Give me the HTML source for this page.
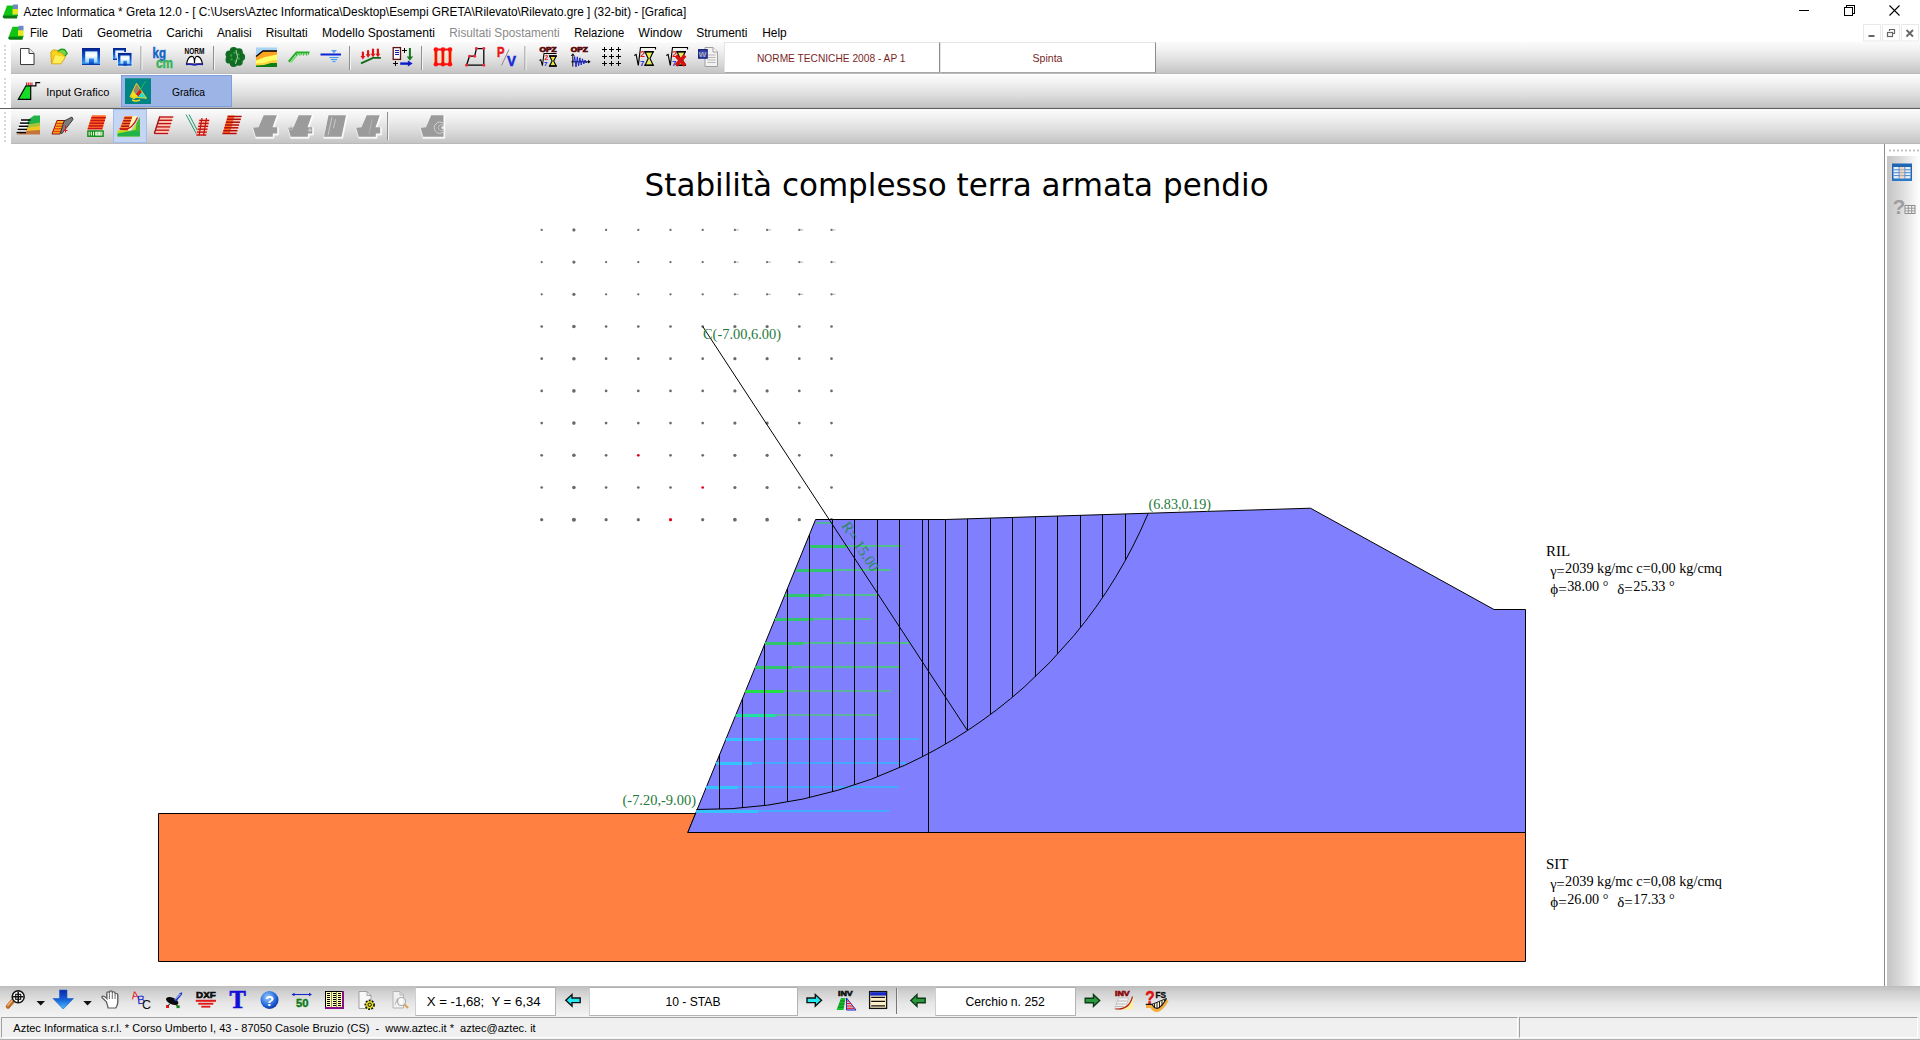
<!DOCTYPE html>
<html lang="it"><head><meta charset="utf-8"><title>Aztec Informatica * Greta 12.0</title>
<style>
html,body{margin:0;padding:0;background:#fff;overflow:hidden}
body{width:1920px;height:1040px;position:relative;font-family:"Liberation Sans","DejaVu Sans",sans-serif}
.abs{position:absolute}
#titlebar{left:0;top:0;width:1920px;height:22px;background:#fff}
#menubar{left:0;top:22px;width:1920px;height:20px;background:#fff}
.tb{left:11px;width:1909px;background:linear-gradient(#fbfbfb 0%,#f1f1f1 25%,#dadada 65%,#c5c5c5 96%,#b2b2b2 100%)}
#tb1{top:42px;height:32px}
#tb2{top:75px;height:32.5px}
#tb3{top:109px;height:35px}
#sepline{left:0;top:108px;width:1920px;height:1px;background:#5e5e5e}
#gripcol{left:0;top:42px;width:11px;height:102px;background:#fff}
.field{background:#fff;border:1px solid #cfcfcf;border-top-color:#b0b0b0;border-bottom-color:#b4b4b4;border-right-color:#b4b4b4;box-sizing:border-box}
.fieldt{border-top-color:#e4e4e4;border-left-color:#e4e4e4;border-right-color:#8c8c8c;border-bottom-color:#a8a8a8}
#tabsel{left:121px;top:75px;width:111px;height:31.5px;background:#9db5e6;border:1px solid #7e9fdf;box-sizing:border-box}
#icosel{left:113px;top:109px;width:34px;height:34px;background:#c5d6f5;border:1px solid #a3bde8;box-sizing:border-box}
#canvas{left:0;top:144px;width:1884px;height:842px;background:#fff}
#rpanel{left:1884px;top:144px;width:36px;height:842px;background:#fff}
#rline{left:1884px;top:144px;width:1px;height:842px;background:#8c8c8c}
#rgrad{left:1887px;top:156px;width:33px;height:830px;background:linear-gradient(90deg,#c4c4c4 0%,#d9d9d9 40%,#f6f6f6 85%,#ffffff 100%)}
#btb{left:0;top:986px;width:1920px;height:31px;background:linear-gradient(#bdbdbd 0%,#cfcfcf 18%,#e6e6e6 55%,#f4f4f4 100%)}
#status{left:0;top:1017px;width:1920px;height:23px;background:#f0f0f0}
.sp{top:1017px;height:21px;box-sizing:border-box;border:1px solid #a0a0a0;border-right-color:#fff;border-bottom-color:#fff;background:#f0f0f0}
svg{position:absolute;left:0;top:0}
</style></head><body>
<div id="titlebar" class="abs"></div>
<div id="menubar" class="abs"></div>
<div id="gripcol" class="abs"></div>
<div id="tb1" class="abs tb"></div>
<div id="tb2" class="abs tb"></div>
<div id="sepline" class="abs"></div>
<div id="tb3" class="abs tb"></div>
<div id="tabsel" class="abs"></div>
<div id="icosel" class="abs"></div>
<div class="abs field fieldt" style="left:724px;top:42px;width:216px;height:31px"></div>
<div class="abs field fieldt" style="left:940px;top:42px;width:216px;height:31px"></div>
<div id="canvas" class="abs"></div>
<div id="rpanel" class="abs"></div><div id="rline" class="abs"></div><div id="rgrad" class="abs"></div>
<div id="btb" class="abs"></div>
<div class="abs field" style="left:415px;top:987px;width:141px;height:29px"></div>
<div class="abs field" style="left:589px;top:987px;width:209px;height:29px"></div>
<div class="abs field" style="left:935px;top:987px;width:141px;height:29px"></div>
<div id="status" class="abs"></div>
<div class="abs sp" style="left:1px;width:1517px"></div>
<div class="abs sp" style="left:1519px;width:399px"></div>
<div class="abs" style="left:0;top:1039px;width:1920px;height:1px;background:#b0b0b0"></div>
<svg width="1920" height="1040" viewBox="0 0 1920 1040">
<text x="644.6" y="196.4" font-size="32" font-family='"DejaVu Sans", "Liberation Sans", sans-serif' textLength="624" lengthAdjust="spacingAndGlyphs" fill="#000">Stabilità complesso terra armata pendio</text>
<circle cx="541.7" cy="229.9" r="1.15" fill="#6a6a6a"/>
<circle cx="541.7" cy="262.1" r="1.15" fill="#6a6a6a"/>
<circle cx="541.7" cy="294.3" r="1.15" fill="#6a6a6a"/>
<circle cx="541.7" cy="326.5" r="1.35" fill="#6a6a6a"/>
<circle cx="541.7" cy="358.7" r="1.35" fill="#6a6a6a"/>
<circle cx="541.7" cy="390.9" r="1.35" fill="#6a6a6a"/>
<circle cx="541.7" cy="423.1" r="1.35" fill="#6a6a6a"/>
<circle cx="541.7" cy="455.3" r="1.35" fill="#6a6a6a"/>
<circle cx="541.7" cy="487.5" r="1.35" fill="#6a6a6a"/>
<circle cx="541.7" cy="519.7" r="1.6" fill="#6a6a6a"/>
<circle cx="573.9" cy="229.9" r="1.6" fill="#6a6a6a"/>
<circle cx="573.9" cy="262.1" r="1.6" fill="#6a6a6a"/>
<circle cx="573.9" cy="294.3" r="1.6" fill="#6a6a6a"/>
<circle cx="573.9" cy="326.5" r="1.8" fill="#6a6a6a"/>
<circle cx="573.9" cy="358.7" r="1.8" fill="#6a6a6a"/>
<circle cx="573.9" cy="390.9" r="1.8" fill="#6a6a6a"/>
<circle cx="573.9" cy="423.1" r="1.8" fill="#6a6a6a"/>
<circle cx="573.9" cy="455.3" r="1.8" fill="#6a6a6a"/>
<circle cx="573.9" cy="487.5" r="1.8" fill="#6a6a6a"/>
<circle cx="573.9" cy="519.7" r="2.05" fill="#6a6a6a"/>
<circle cx="606.1" cy="229.9" r="1.15" fill="#6a6a6a"/>
<circle cx="606.1" cy="262.1" r="1.15" fill="#6a6a6a"/>
<circle cx="606.1" cy="294.3" r="1.15" fill="#6a6a6a"/>
<circle cx="606.1" cy="326.5" r="1.35" fill="#6a6a6a"/>
<circle cx="606.1" cy="358.7" r="1.35" fill="#6a6a6a"/>
<circle cx="606.1" cy="390.9" r="1.35" fill="#6a6a6a"/>
<circle cx="606.1" cy="423.1" r="1.35" fill="#6a6a6a"/>
<circle cx="606.1" cy="455.3" r="1.35" fill="#6a6a6a"/>
<circle cx="606.1" cy="487.5" r="1.35" fill="#6a6a6a"/>
<circle cx="606.1" cy="519.7" r="1.6" fill="#6a6a6a"/>
<circle cx="638.3" cy="229.9" r="1.15" fill="#6a6a6a"/>
<circle cx="638.3" cy="262.1" r="1.15" fill="#6a6a6a"/>
<circle cx="638.3" cy="294.3" r="1.15" fill="#6a6a6a"/>
<circle cx="638.3" cy="326.5" r="1.35" fill="#6a6a6a"/>
<circle cx="638.3" cy="358.7" r="1.35" fill="#6a6a6a"/>
<circle cx="638.3" cy="390.9" r="1.35" fill="#6a6a6a"/>
<circle cx="638.3" cy="423.1" r="1.35" fill="#6a6a6a"/>
<circle cx="638.3" cy="455.3" r="1.35" fill="#e0001a"/>
<circle cx="638.3" cy="487.5" r="1.35" fill="#6a6a6a"/>
<circle cx="638.3" cy="519.7" r="1.6" fill="#6a6a6a"/>
<circle cx="670.5" cy="229.9" r="1.15" fill="#6a6a6a"/>
<circle cx="670.5" cy="262.1" r="1.15" fill="#6a6a6a"/>
<circle cx="670.5" cy="294.3" r="1.15" fill="#6a6a6a"/>
<circle cx="670.5" cy="326.5" r="1.35" fill="#6a6a6a"/>
<circle cx="670.5" cy="358.7" r="1.35" fill="#6a6a6a"/>
<circle cx="670.5" cy="390.9" r="1.35" fill="#6a6a6a"/>
<circle cx="670.5" cy="423.1" r="1.35" fill="#6a6a6a"/>
<circle cx="670.5" cy="455.3" r="1.35" fill="#6a6a6a"/>
<circle cx="670.5" cy="487.5" r="1.35" fill="#6a6a6a"/>
<circle cx="670.5" cy="519.7" r="1.6" fill="#e0001a"/>
<circle cx="702.7" cy="229.9" r="1.15" fill="#6a6a6a"/>
<circle cx="702.7" cy="262.1" r="1.15" fill="#6a6a6a"/>
<circle cx="702.7" cy="294.3" r="1.15" fill="#6a6a6a"/>
<circle cx="702.7" cy="326.5" r="1.35" fill="#6a6a6a"/>
<circle cx="702.7" cy="358.7" r="1.35" fill="#6a6a6a"/>
<circle cx="702.7" cy="390.9" r="1.35" fill="#6a6a6a"/>
<circle cx="702.7" cy="423.1" r="1.35" fill="#6a6a6a"/>
<circle cx="702.7" cy="455.3" r="1.35" fill="#6a6a6a"/>
<circle cx="702.7" cy="487.5" r="1.35" fill="#e0001a"/>
<circle cx="702.7" cy="519.7" r="1.6" fill="#6a6a6a"/>
<rect x="734.9" y="229.4" width="4" height="1" fill="#b8b8b8"/>
<circle cx="734.9" cy="229.9" r="1.15" fill="#6a6a6a"/>
<rect x="734.9" y="261.6" width="4" height="1" fill="#b8b8b8"/>
<circle cx="734.9" cy="262.1" r="1.15" fill="#6a6a6a"/>
<rect x="734.9" y="293.8" width="4" height="1" fill="#b8b8b8"/>
<circle cx="734.9" cy="294.3" r="1.15" fill="#6a6a6a"/>
<circle cx="734.9" cy="326.5" r="1.6" fill="#6a6a6a"/>
<circle cx="734.9" cy="358.7" r="1.6" fill="#6a6a6a"/>
<circle cx="734.9" cy="390.9" r="1.6" fill="#6a6a6a"/>
<circle cx="734.9" cy="423.1" r="1.6" fill="#6a6a6a"/>
<circle cx="734.9" cy="455.3" r="1.6" fill="#6a6a6a"/>
<circle cx="734.9" cy="487.5" r="1.6" fill="#6a6a6a"/>
<circle cx="734.9" cy="519.7" r="1.85" fill="#6a6a6a"/>
<rect x="767.1" y="229.4" width="4" height="1" fill="#b8b8b8"/>
<circle cx="767.1" cy="229.9" r="1.15" fill="#6a6a6a"/>
<rect x="767.1" y="261.6" width="4" height="1" fill="#b8b8b8"/>
<circle cx="767.1" cy="262.1" r="1.15" fill="#6a6a6a"/>
<rect x="767.1" y="293.8" width="4" height="1" fill="#b8b8b8"/>
<circle cx="767.1" cy="294.3" r="1.15" fill="#6a6a6a"/>
<circle cx="767.1" cy="326.5" r="1.6" fill="#6a6a6a"/>
<circle cx="767.1" cy="358.7" r="1.6" fill="#6a6a6a"/>
<circle cx="767.1" cy="390.9" r="1.6" fill="#6a6a6a"/>
<circle cx="767.1" cy="423.1" r="1.6" fill="#6a6a6a"/>
<circle cx="767.1" cy="455.3" r="1.6" fill="#6a6a6a"/>
<circle cx="767.1" cy="487.5" r="1.6" fill="#6a6a6a"/>
<circle cx="767.1" cy="519.7" r="1.85" fill="#6a6a6a"/>
<rect x="799.3" y="229.4" width="4" height="1" fill="#b8b8b8"/>
<circle cx="799.3" cy="229.9" r="1.15" fill="#6a6a6a"/>
<rect x="799.3" y="261.6" width="4" height="1" fill="#b8b8b8"/>
<circle cx="799.3" cy="262.1" r="1.15" fill="#6a6a6a"/>
<rect x="799.3" y="293.8" width="4" height="1" fill="#b8b8b8"/>
<circle cx="799.3" cy="294.3" r="1.15" fill="#6a6a6a"/>
<circle cx="799.3" cy="326.5" r="1.35" fill="#6a6a6a"/>
<circle cx="799.3" cy="358.7" r="1.35" fill="#6a6a6a"/>
<circle cx="799.3" cy="390.9" r="1.35" fill="#6a6a6a"/>
<circle cx="799.3" cy="423.1" r="1.35" fill="#6a6a6a"/>
<circle cx="799.3" cy="455.3" r="1.35" fill="#6a6a6a"/>
<circle cx="799.3" cy="487.5" r="1.35" fill="#6a6a6a"/>
<circle cx="799.3" cy="519.7" r="1.6" fill="#6a6a6a"/>
<rect x="831.5" y="229.4" width="4" height="1" fill="#b8b8b8"/>
<circle cx="831.5" cy="229.9" r="1.15" fill="#6a6a6a"/>
<rect x="831.5" y="261.6" width="4" height="1" fill="#b8b8b8"/>
<circle cx="831.5" cy="262.1" r="1.15" fill="#6a6a6a"/>
<rect x="831.5" y="293.8" width="4" height="1" fill="#b8b8b8"/>
<circle cx="831.5" cy="294.3" r="1.15" fill="#6a6a6a"/>
<circle cx="831.5" cy="326.5" r="1.35" fill="#6a6a6a"/>
<circle cx="831.5" cy="358.7" r="1.35" fill="#6a6a6a"/>
<circle cx="831.5" cy="390.9" r="1.35" fill="#6a6a6a"/>
<circle cx="831.5" cy="423.1" r="1.35" fill="#6a6a6a"/>
<circle cx="831.5" cy="455.3" r="1.35" fill="#6a6a6a"/>
<circle cx="831.5" cy="487.5" r="1.35" fill="#6a6a6a"/>
<circle cx="831.5" cy="519.7" r="1.6" fill="#6a6a6a"/>
<polygon points="158.5,813.5 695.6,813.5 687.8,832.5 1525.5,832.5 1525.5,961.5 158.5,961.5" fill="#ff8040" stroke="#000" stroke-width="1"/>
<polygon points="687.8,832.5 815.6,519.5 945.8,519.5 1310.5,508.2 1494,609.5 1525.5,609.5 1525.5,832.5" fill="#8080ff" stroke="#000" stroke-width="1"/>
<rect x="816.0" y="522" width="16.8" height="2" fill="#4fb49a"/>
<rect x="809.1" y="545" width="92.4" height="2" fill="#4fbf8c"/>
<rect x="809.1" y="545" width="37.0" height="3" fill="#30c46c"/>
<rect x="796.3" y="569" width="94.5" height="2" fill="#4fbf8c"/>
<rect x="796.3" y="569" width="36.0" height="3" fill="#30c46c"/>
<rect x="784.9" y="594" width="93.7" height="2" fill="#4fbf8c"/>
<rect x="784.9" y="594" width="38.0" height="3" fill="#30c46c"/>
<rect x="775.1" y="618" width="96.1" height="2" fill="#4fbf8c"/>
<rect x="775.1" y="618" width="38.0" height="3" fill="#30c46c"/>
<rect x="765.2" y="642" width="144.8" height="2" fill="#4fbf8c"/>
<rect x="765.2" y="642" width="38.0" height="3" fill="#30c46c"/>
<rect x="755.4" y="666" width="145.2" height="2" fill="#4fbf8c"/>
<rect x="755.4" y="666" width="36.0" height="3" fill="#30c46c"/>
<rect x="745.5" y="690" width="145.5" height="2" fill="#5cb4a0"/>
<rect x="745.5" y="690" width="38.0" height="3" fill="#22e044"/>
<rect x="735.6" y="714" width="143.4" height="2" fill="#5cb4a0"/>
<rect x="735.6" y="714" width="40.0" height="3" fill="#22e0a0"/>
<rect x="725.8" y="738" width="192.9" height="2" fill="#45aaff"/>
<rect x="725.8" y="738" width="36.5" height="3" fill="#35c2ff"/>
<rect x="715.9" y="762" width="190.1" height="2" fill="#45aaff"/>
<rect x="715.9" y="762" width="36.0" height="3" fill="#35c2ff"/>
<rect x="706.1" y="786" width="191.9" height="2" fill="#45aaff"/>
<rect x="706.1" y="786" width="31.5" height="3" fill="#35c2ff"/>
<rect x="696.2" y="810" width="193.3" height="2" fill="#45aaff"/>
<rect x="696.2" y="810" width="62.0" height="3" fill="#35c2ff"/>
<path d="M696.30,809.50 A483.00,483.00 0 0 0 1148.07,513.58" fill="none" stroke="#000" stroke-width="1"/>
<line x1="719.50" y1="754.37" x2="719.50" y2="809.21" stroke="#000" stroke-width="1" shape-rendering="crispEdges"/>
<line x1="742.50" y1="698.18" x2="742.50" y2="807.86" stroke="#000" stroke-width="1" shape-rendering="crispEdges"/>
<line x1="764.50" y1="644.44" x2="764.50" y2="805.54" stroke="#000" stroke-width="1" shape-rendering="crispEdges"/>
<line x1="787.50" y1="588.25" x2="787.50" y2="802.00" stroke="#000" stroke-width="1" shape-rendering="crispEdges"/>
<line x1="809.50" y1="534.50" x2="809.50" y2="797.55" stroke="#000" stroke-width="1" shape-rendering="crispEdges"/>
<line x1="832.50" y1="519.60" x2="832.50" y2="791.74" stroke="#000" stroke-width="1" shape-rendering="crispEdges"/>
<line x1="854.50" y1="519.60" x2="854.50" y2="785.04" stroke="#000" stroke-width="1" shape-rendering="crispEdges"/>
<line x1="877.50" y1="519.60" x2="877.50" y2="776.78" stroke="#000" stroke-width="1" shape-rendering="crispEdges"/>
<line x1="899.50" y1="519.60" x2="899.50" y2="767.61" stroke="#000" stroke-width="1" shape-rendering="crispEdges"/>
<line x1="922.50" y1="519.60" x2="922.50" y2="756.61" stroke="#000" stroke-width="1" shape-rendering="crispEdges"/>
<line x1="945.50" y1="519.60" x2="945.50" y2="744.06" stroke="#000" stroke-width="1" shape-rendering="crispEdges"/>
<line x1="967.50" y1="518.92" x2="967.50" y2="730.47" stroke="#000" stroke-width="1" shape-rendering="crispEdges"/>
<line x1="990.50" y1="518.20" x2="990.50" y2="714.42" stroke="#000" stroke-width="1" shape-rendering="crispEdges"/>
<line x1="1012.50" y1="517.52" x2="1012.50" y2="697.09" stroke="#000" stroke-width="1" shape-rendering="crispEdges"/>
<line x1="1035.50" y1="516.80" x2="1035.50" y2="676.59" stroke="#000" stroke-width="1" shape-rendering="crispEdges"/>
<line x1="1057.50" y1="516.11" x2="1057.50" y2="654.27" stroke="#000" stroke-width="1" shape-rendering="crispEdges"/>
<line x1="1080.50" y1="515.39" x2="1080.50" y2="627.48" stroke="#000" stroke-width="1" shape-rendering="crispEdges"/>
<line x1="1102.50" y1="514.70" x2="1102.50" y2="597.57" stroke="#000" stroke-width="1" shape-rendering="crispEdges"/>
<line x1="1125.50" y1="513.98" x2="1125.50" y2="560.09" stroke="#000" stroke-width="1" shape-rendering="crispEdges"/>
<line x1="928.5" y1="519.6" x2="928.5" y2="832.3" stroke="#000" stroke-width="1" shape-rendering="crispEdges"/>
<line x1="702.74" y1="326.50" x2="967.39" y2="730.54" stroke="#000" stroke-width="1"/>
<text x="703" y="339" font-size="14.5" font-family='"Liberation Serif", "DejaVu Serif", serif' fill="#1f7a3c" textLength="78" lengthAdjust="spacingAndGlyphs">C(-7.00,6.00)</text>
<text x="1148.5" y="509" font-size="14.5" font-family='"Liberation Serif", "DejaVu Serif", serif' fill="#1f7a3c" textLength="62.5" lengthAdjust="spacingAndGlyphs">(6.83,0.19)</text>
<text x="622.5" y="805" font-size="14.5" font-family='"Liberation Serif", "DejaVu Serif", serif' fill="#1f7a3c" textLength="73.5" lengthAdjust="spacingAndGlyphs">(-7.20,-9.00)</text>
<text transform="translate(841,525.8) rotate(56.78)" x="0" y="0" font-size="15" font-family='"Liberation Serif", "DejaVu Serif", serif' fill="#2a8a58" xml:space="preserve">R= 15.00</text>
<text x="1546" y="556" font-size="15" font-family='"Liberation Serif", "DejaVu Serif", serif' fill="#000" xml:space="preserve">RIL</text>
<text x="1550.2" y="576.3" font-size="15" font-family='"Liberation Serif", "DejaVu Serif", serif' fill="#000" xml:space="preserve" textLength="14.5" lengthAdjust="spacingAndGlyphs">γ=</text>
<text x="1565" y="573.3" font-size="15" font-family='"Liberation Serif", "DejaVu Serif", serif' fill="#000" xml:space="preserve" textLength="157" lengthAdjust="spacingAndGlyphs">2039 kg/mc c=0,00 kg/cmq</text>
<text x="1550.2" y="593.5" font-size="15" font-family='"Liberation Serif", "DejaVu Serif", serif' fill="#000" xml:space="preserve" textLength="16.5" lengthAdjust="spacingAndGlyphs">ϕ=</text>
<text x="1567.2" y="590.5" font-size="15" font-family='"Liberation Serif", "DejaVu Serif", serif' fill="#000" xml:space="preserve" textLength="41.2" lengthAdjust="spacingAndGlyphs">38.00 °</text>
<text x="1617.3" y="593.5" font-size="15" font-family='"Liberation Serif", "DejaVu Serif", serif' fill="#000" xml:space="preserve" textLength="15.5" lengthAdjust="spacingAndGlyphs">δ=</text>
<text x="1633.3" y="590.5" font-size="15" font-family='"Liberation Serif", "DejaVu Serif", serif' fill="#000" xml:space="preserve" textLength="41.4" lengthAdjust="spacingAndGlyphs">25.33 °</text>
<text x="1546" y="869" font-size="15" font-family='"Liberation Serif", "DejaVu Serif", serif' fill="#000" xml:space="preserve">SIT</text>
<text x="1550.2" y="889.3" font-size="15" font-family='"Liberation Serif", "DejaVu Serif", serif' fill="#000" xml:space="preserve" textLength="14.5" lengthAdjust="spacingAndGlyphs">γ=</text>
<text x="1565" y="886.3" font-size="15" font-family='"Liberation Serif", "DejaVu Serif", serif' fill="#000" xml:space="preserve" textLength="157" lengthAdjust="spacingAndGlyphs">2039 kg/mc c=0,08 kg/cmq</text>
<text x="1550.2" y="906.5" font-size="15" font-family='"Liberation Serif", "DejaVu Serif", serif' fill="#000" xml:space="preserve" textLength="16.5" lengthAdjust="spacingAndGlyphs">ϕ=</text>
<text x="1567.2" y="903.5" font-size="15" font-family='"Liberation Serif", "DejaVu Serif", serif' fill="#000" xml:space="preserve" textLength="41.2" lengthAdjust="spacingAndGlyphs">26.00 °</text>
<text x="1617.3" y="906.5" font-size="15" font-family='"Liberation Serif", "DejaVu Serif", serif' fill="#000" xml:space="preserve" textLength="15.5" lengthAdjust="spacingAndGlyphs">δ=</text>
<text x="1633.3" y="903.5" font-size="15" font-family='"Liberation Serif", "DejaVu Serif", serif' fill="#000" xml:space="preserve" textLength="41.4" lengthAdjust="spacingAndGlyphs">17.33 °</text>
</svg>
<svg width="1920" height="1040" viewBox="0 0 1920 1040">
<text x="23.6" y="15.6" font-size="12" fill="#000" text-anchor="start" font-family='"Liberation Sans", "DejaVu Sans", sans-serif' textLength="662.6" lengthAdjust="spacingAndGlyphs" xml:space="preserve">Aztec Informatica * Greta 12.0 - [ C:\Users\Aztec Informatica\Desktop\Esempi GRETA\Rilevato\Rilevato.gre ] (32-bit) - [Grafica]</text>
<text x="30" y="37" font-size="12" fill="#000" text-anchor="start" font-family='"Liberation Sans", "DejaVu Sans", sans-serif' textLength="18" lengthAdjust="spacingAndGlyphs" xml:space="preserve">File</text>
<text x="62" y="37" font-size="12" fill="#000" text-anchor="start" font-family='"Liberation Sans", "DejaVu Sans", sans-serif' textLength="20.7" lengthAdjust="spacingAndGlyphs" xml:space="preserve">Dati</text>
<text x="97" y="37" font-size="12" fill="#000" text-anchor="start" font-family='"Liberation Sans", "DejaVu Sans", sans-serif' textLength="54.7" lengthAdjust="spacingAndGlyphs" xml:space="preserve">Geometria</text>
<text x="166.3" y="37" font-size="12" fill="#000" text-anchor="start" font-family='"Liberation Sans", "DejaVu Sans", sans-serif' textLength="36.7" lengthAdjust="spacingAndGlyphs" xml:space="preserve">Carichi</text>
<text x="217" y="37" font-size="12" fill="#000" text-anchor="start" font-family='"Liberation Sans", "DejaVu Sans", sans-serif' textLength="34.7" lengthAdjust="spacingAndGlyphs" xml:space="preserve">Analisi</text>
<text x="265.7" y="37" font-size="12" fill="#000" text-anchor="start" font-family='"Liberation Sans", "DejaVu Sans", sans-serif' textLength="42.0" lengthAdjust="spacingAndGlyphs" xml:space="preserve">Risultati</text>
<text x="322" y="37" font-size="12" fill="#000" text-anchor="start" font-family='"Liberation Sans", "DejaVu Sans", sans-serif' textLength="113" lengthAdjust="spacingAndGlyphs" xml:space="preserve">Modello Spostamenti</text>
<text x="449.3" y="37" font-size="12" fill="#8a8a8a" text-anchor="start" font-family='"Liberation Sans", "DejaVu Sans", sans-serif' textLength="110.4" lengthAdjust="spacingAndGlyphs" xml:space="preserve">Risultati Spostamenti</text>
<text x="574.2" y="37" font-size="12" fill="#000" text-anchor="start" font-family='"Liberation Sans", "DejaVu Sans", sans-serif' textLength="50.0" lengthAdjust="spacingAndGlyphs" xml:space="preserve">Relazione</text>
<text x="638.3" y="37" font-size="12" fill="#000" text-anchor="start" font-family='"Liberation Sans", "DejaVu Sans", sans-serif' textLength="43.7" lengthAdjust="spacingAndGlyphs" xml:space="preserve">Window</text>
<text x="696.3" y="37" font-size="12" fill="#000" text-anchor="start" font-family='"Liberation Sans", "DejaVu Sans", sans-serif' textLength="51.2" lengthAdjust="spacingAndGlyphs" xml:space="preserve">Strumenti</text>
<text x="762.2" y="37" font-size="12" fill="#000" text-anchor="start" font-family='"Liberation Sans", "DejaVu Sans", sans-serif' textLength="24.5" lengthAdjust="spacingAndGlyphs" xml:space="preserve">Help</text>
<text x="757" y="62" font-size="11" fill="#7a1f1f" text-anchor="start" font-family='"Liberation Sans", "DejaVu Sans", sans-serif' textLength="148.5" lengthAdjust="spacingAndGlyphs" xml:space="preserve">NORME TECNICHE 2008 - AP 1</text>
<text x="1047.5" y="62" font-size="11" fill="#7a1f1f" text-anchor="middle" font-family='"Liberation Sans", "DejaVu Sans", sans-serif' textLength="30" lengthAdjust="spacingAndGlyphs" xml:space="preserve">Spinta</text>
<text x="46.3" y="95.8" font-size="11" fill="#000" text-anchor="start" font-family='"Liberation Sans", "DejaVu Sans", sans-serif' textLength="63" lengthAdjust="spacingAndGlyphs" xml:space="preserve">Input Grafico</text>
<text x="171.9" y="95.8" font-size="11" fill="#000" text-anchor="start" font-family='"Liberation Sans", "DejaVu Sans", sans-serif' textLength="33.2" lengthAdjust="spacingAndGlyphs" xml:space="preserve">Grafica</text>
<text x="426.7" y="1005.8" font-size="12" fill="#000" text-anchor="start" font-family='"Liberation Sans", "DejaVu Sans", sans-serif' textLength="114" lengthAdjust="spacingAndGlyphs" xml:space="preserve">X = -1,68;  Y = 6,34</text>
<text x="665.5" y="1005.8" font-size="12" fill="#000" text-anchor="start" font-family='"Liberation Sans", "DejaVu Sans", sans-serif' textLength="55" lengthAdjust="spacingAndGlyphs" xml:space="preserve">10 - STAB</text>
<text x="965.5" y="1005.8" font-size="12" fill="#000" text-anchor="start" font-family='"Liberation Sans", "DejaVu Sans", sans-serif' textLength="79.2" lengthAdjust="spacingAndGlyphs" xml:space="preserve">Cerchio n. 252</text>
<text x="13.3" y="1031.7" font-size="11" fill="#000" text-anchor="start" font-family='"Liberation Sans", "DejaVu Sans", sans-serif' textLength="522.4" lengthAdjust="spacingAndGlyphs" xml:space="preserve">Aztec Informatica s.r.l. * Corso Umberto I, 43 - 87050 Casole Bruzio (CS)  -  www.aztec.it *  aztec@aztec. it</text>
<g transform="translate(2.5,4)"><polygon points="4.5,1.5 11,1.5 11,12 0.5,12" fill="#12c412"/><polygon points="0.8,11.5 15,11.5 14.5,14.5 1.5,14.5 0,13" fill="#0a7a12"/><rect x="10.5" y="0.5" width="5" height="5" fill="#6f86c8"/><rect x="10" y="5" width="5.5" height="5.5" fill="#e6ea1a"/><rect x="11" y="10.5" width="4.5" height="1.5" fill="#12a012"/></g>
<g transform="translate(8,25.3)"><polygon points="4.5,1.5 11,1.5 11,12 0.5,12" fill="#12c412"/><polygon points="0.8,11.5 15,11.5 14.5,14.5 1.5,14.5 0,13" fill="#0a7a12"/><rect x="10.5" y="0.5" width="5" height="5" fill="#6f86c8"/><rect x="10" y="5" width="5.5" height="5.5" fill="#e6ea1a"/><rect x="11" y="10.5" width="4.5" height="1.5" fill="#12a012"/></g>
<g transform="translate(0,0)"><line x1="1799" y1="10.5" x2="1809" y2="10.5" stroke="#000" stroke-width="1" shape-rendering="crispEdges"/><rect x="1844.5" y="7.5" width="8" height="8" fill="none" stroke="#000" shape-rendering="crispEdges"/><path d="M1846.5,7.5 v-2 h8 v8 h-2" fill="none" stroke="#000" shape-rendering="crispEdges"/><path d="M1889.5,5.5 l10,10 M1899.5,5.5 l-10,10" stroke="#000" stroke-width="1.1" fill="none"/><rect x="1863.5" y="24.5" width="17" height="16.5" fill="#fff" stroke="#e9e9e9"/><rect x="1882.5" y="24.5" width="17" height="16.5" fill="#fff" stroke="#e9e9e9"/><rect x="1901.5" y="24.5" width="17" height="16.5" fill="#fff" stroke="#e9e9e9"/><rect x="1868.5" y="35" width="6" height="2" fill="#666"/><rect x="1887.5" y="32.5" width="5" height="4" fill="none" stroke="#666" stroke-width="1.2"/><path d="M1889.5,31 v-1.5 h5 v4 h-1.5" fill="none" stroke="#666" stroke-width="1.2"/><path d="M1906.5,30 l6.5,6.5 M1913,30 l-6.5,6.5" stroke="#666" stroke-width="1.8" fill="none"/></g>
<g transform="translate(0,0)"><rect x="4" y="45" width="2" height="2" fill="#dadada"/><rect x="4" y="49" width="2" height="2" fill="#dadada"/><rect x="4" y="53" width="2" height="2" fill="#dadada"/><rect x="4" y="57" width="2" height="2" fill="#dadada"/><rect x="4" y="61" width="2" height="2" fill="#dadada"/><rect x="4" y="65" width="2" height="2" fill="#dadada"/><rect x="4" y="69" width="2" height="2" fill="#dadada"/><rect x="4" y="78" width="2" height="2" fill="#dadada"/><rect x="4" y="82" width="2" height="2" fill="#dadada"/><rect x="4" y="86" width="2" height="2" fill="#dadada"/><rect x="4" y="90" width="2" height="2" fill="#dadada"/><rect x="4" y="94" width="2" height="2" fill="#dadada"/><rect x="4" y="98" width="2" height="2" fill="#dadada"/><rect x="4" y="102" width="2" height="2" fill="#dadada"/><rect x="4" y="112" width="2" height="2" fill="#dadada"/><rect x="4" y="116" width="2" height="2" fill="#dadada"/><rect x="4" y="120" width="2" height="2" fill="#dadada"/><rect x="4" y="124" width="2" height="2" fill="#dadada"/><rect x="4" y="128" width="2" height="2" fill="#dadada"/><rect x="4" y="132" width="2" height="2" fill="#dadada"/><rect x="4" y="136" width="2" height="2" fill="#dadada"/><rect x="4" y="140" width="2" height="2" fill="#dadada"/><rect x="1889" y="149.5" width="2" height="2" fill="#c4c4c4"/><rect x="1893" y="149.5" width="2" height="2" fill="#c4c4c4"/><rect x="1897" y="149.5" width="2" height="2" fill="#c4c4c4"/><rect x="1901" y="149.5" width="2" height="2" fill="#c4c4c4"/><rect x="1905" y="149.5" width="2" height="2" fill="#c4c4c4"/><rect x="1909" y="149.5" width="2" height="2" fill="#c4c4c4"/><rect x="1913" y="149.5" width="2" height="2" fill="#c4c4c4"/><rect x="1917" y="149.5" width="2" height="2" fill="#c4c4c4"/></g>
<g transform="translate(0,0)"><line x1="141" y1="46" x2="141" y2="70" stroke="#8f8f8f" stroke-width="1"/><line x1="142" y1="46" x2="142" y2="70" stroke="#f4f4f4" stroke-width="1"/><line x1="213.5" y1="46" x2="213.5" y2="70" stroke="#8f8f8f" stroke-width="1"/><line x1="214.5" y1="46" x2="214.5" y2="70" stroke="#f4f4f4" stroke-width="1"/><line x1="349.5" y1="46" x2="349.5" y2="70" stroke="#8f8f8f" stroke-width="1"/><line x1="350.5" y1="46" x2="350.5" y2="70" stroke="#f4f4f4" stroke-width="1"/><line x1="421.5" y1="46" x2="421.5" y2="70" stroke="#8f8f8f" stroke-width="1"/><line x1="422.5" y1="46" x2="422.5" y2="70" stroke="#f4f4f4" stroke-width="1"/><line x1="525" y1="46" x2="525" y2="70" stroke="#8f8f8f" stroke-width="1"/><line x1="526" y1="46" x2="526" y2="70" stroke="#f4f4f4" stroke-width="1"/><line x1="387.5" y1="112" x2="387.5" y2="140" stroke="#8f8f8f"/><line x1="388.5" y1="112" x2="388.5" y2="140" stroke="#f4f4f4"/><line x1="896.5" y1="988" x2="896.5" y2="1014" stroke="#767676"/><line x1="897.5" y1="988" x2="897.5" y2="1014" stroke="#f4f4f4" opacity=".6"/></g>
<g transform="translate(20,48)"><path d="M1.5,1.5 h8 l5,5 v11 h-13 z" fill="#b8b8b8" opacity=".6"/><path d="M0.5,0.5 h8.5 l5,5 v11 h-13.5 z" fill="#fff" stroke="#3c3c3c"/><path d="M9,0.5 v5 h5" fill="#eee" stroke="#3c3c3c"/></g>
<g transform="translate(50,47.5)"><path d="M6,4.5 Q10,-0.5 15,1.5 L18,6 L13.5,11 Z" fill="#1f9a1f"/><path d="M8,4 Q11,1.5 14.5,3 L16.5,6 L13,9.5 Z" fill="#6fd84a"/><polygon points="0.8,4.5 3,2.5 6.5,2.5 8,4.5 11,5 15.5,9.5 11,16.3 1.5,16.3" fill="#f6d41c" stroke="#d69a10" stroke-width=".9"/><polygon points="4,7.5 15,9.5 10.8,15.8 2.5,15.8" fill="#fff05a"/><path d="M2,15.5 L4.5,7.5" stroke="#e8b020" stroke-width="1"/></g>
<g transform="translate(0,0)"><defs><linearGradient id="gflop" x1="0" y1="0" x2="0" y2="1"><stop offset="0" stop-color="#062088"/><stop offset=".45" stop-color="#0b4fd0"/><stop offset="1" stop-color="#48a8f0"/></linearGradient><linearGradient id="gflop2" x1="0" y1="0" x2="0" y2="1"><stop offset="0" stop-color="#d8f0ff"/><stop offset=".35" stop-color="#ffffff"/><stop offset="1" stop-color="#8fd0ff"/></linearGradient><linearGradient id="gflop3" x1="0" y1="0" x2="0" y2="1"><stop offset="0" stop-color="#3a90f0"/><stop offset="1" stop-color="#0838b8"/></linearGradient><radialGradient id="ghelp" cx=".4" cy=".35" r=".7"><stop offset="0" stop-color="#9fd0ff"/><stop offset=".6" stop-color="#2a6fe0"/><stop offset="1" stop-color="#0a2fa0"/></radialGradient><linearGradient id="garrow" x1="0" y1="0" x2="0" y2="1"><stop offset="0" stop-color="#0828a8"/><stop offset=".5" stop-color="#1560d8"/><stop offset="1" stop-color="#4cc0ff"/></linearGradient></defs></g>
<g transform="translate(82,48)"><rect x="0" y="0" width="18" height="17" fill="url(#gflop)"/><rect x="3.2" y="3.4" width="12.2" height="11.2" fill="url(#gflop2)"/><rect x="7.0" y="10.5" width="4.9" height="6.5" fill="url(#gflop3)"/><rect x="0" y="15.8" width="18" height="1.2" fill="#0a3cb0"/></g>
<g transform="translate(113,48)"><g transform="translate(0,0)"><rect x="0" y="0" width="13" height="12" fill="url(#gflop)"/><rect x="2.3" y="2.4" width="8.8" height="7.9" fill="url(#gflop2)"/><rect x="5.1" y="7.4" width="3.5" height="4.6" fill="url(#gflop3)"/><rect x="0" y="10.8" width="13" height="1.2" fill="#0a3cb0"/></g><g transform="translate(5,5)"><rect x="-1" y="-1" width="15.5" height="14.5" fill="#dfe8f8"/><rect x="0" y="0" width="13.5" height="12.5" fill="url(#gflop)"/><rect x="2.4" y="2.5" width="9.2" height="8.2" fill="url(#gflop2)"/><rect x="5.3" y="7.8" width="3.6" height="4.8" fill="url(#gflop3)"/><rect x="0" y="11.3" width="13.5" height="1.2" fill="#0a3cb0"/></g></g>
<g transform="translate(152.5,47)"><text x="0" y="11" font-family='"Liberation Sans", "DejaVu Sans", sans-serif' font-weight="bold" font-size="15" fill="#1565c8" stroke="#1565c8" stroke-width=".5" textLength="13.5" lengthAdjust="spacingAndGlyphs">kg</text><text x="3.5" y="20.5" font-family='"Liberation Sans", "DejaVu Sans", sans-serif' font-weight="bold" font-size="15" fill="#35b457" stroke="#35b457" stroke-width=".5" textLength="17" lengthAdjust="spacingAndGlyphs">cm</text></g>
<g transform="translate(184.5,47)"><text x="0" y="6.8" font-family='"Liberation Sans", "DejaVu Sans", sans-serif' font-weight="bold" font-size="8.5" fill="#000" textLength="20" lengthAdjust="spacingAndGlyphs">NORM</text><path d="M2,17 C3,12 5,9 8,9.5 C9.5,10 10,12 10,16 C10,12 10.5,10 12,9.5 C15,9 17,12 18,17 Z" fill="#fff" stroke="#000" stroke-width="1.2"/><path d="M1.5,17.5 q4,-1 8.5,0.5 q4.5,-1.5 8.5,-0.5" fill="none" stroke="#2222b0" stroke-width="1.6"/></g>
<g transform="translate(225,47)"><circle cx="16.2" cy="10.0" r="3.9" fill="#126b22"/><circle cx="13.9" cy="14.8" r="3.9" fill="#126b22"/><circle cx="8.6" cy="16.0" r="3.9" fill="#126b22"/><circle cx="4.4" cy="12.7" r="3.9" fill="#126b22"/><circle cx="4.4" cy="7.3" r="3.9" fill="#126b22"/><circle cx="8.6" cy="4.0" r="3.9" fill="#126b22"/><circle cx="13.9" cy="5.2" r="3.9" fill="#126b22"/><circle cx="10" cy="10" r="5.5" fill="#126b22"/><circle cx="13.9" cy="11.6" r="1.3" fill="#2e9a3c"/><circle cx="10.5" cy="14.2" r="1.3" fill="#2e9a3c"/><circle cx="6.6" cy="12.5" r="1.3" fill="#2e9a3c"/><circle cx="6.1" cy="8.4" r="1.3" fill="#2e9a3c"/><circle cx="9.5" cy="5.8" r="1.3" fill="#2e9a3c"/><circle cx="13.4" cy="7.5" r="1.3" fill="#2e9a3c"/><path d="M11,3 L12.5,10 L10.5,17" stroke="#cfe8cf" stroke-width=".8" fill="none"/></g>
<g transform="translate(256,47.5)"><rect x="0" y="0" width="21" height="19.5" fill="#a9d3f2"/><polygon points="0,9 7,3.5 21,3.5 21,19.5 0,19.5" fill="#ffa422"/><polygon points="0,13 9,9.5 21,7 21,19.5 0,19.5" fill="#ffff66"/><polygon points="0,16 8,15.5 15,13 21,12.5 21,19.5 0,19.5" fill="#ffd23c"/><polygon points="0,18 8,17.5 15,15.5 21,15.5 21,19.5 0,19.5" fill="#0e7d14"/><path d="M0,9 L7,3.5 L21,3.5" stroke="#000" stroke-width="1.3" fill="none"/></g>
<g transform="translate(288,51)"><polygon points="0,10 8,0.5 21.5,0.5 21.5,2.2 9,2.2 1.5,11.5" fill="#22b022"/><polygon points="2,11.5 9,3 10.5,3.5 4,11.5" fill="#7ed87e"/><line x1="8.5" y1="2" x2="8.5" y2="4.8" stroke="#28b428" stroke-width=".9"/><line x1="10.2" y1="2" x2="10.2" y2="4.0" stroke="#28b428" stroke-width=".9"/><line x1="11.9" y1="2" x2="11.9" y2="4.8" stroke="#28b428" stroke-width=".9"/><line x1="13.6" y1="2" x2="13.6" y2="4.0" stroke="#28b428" stroke-width=".9"/><line x1="15.3" y1="2" x2="15.3" y2="4.8" stroke="#28b428" stroke-width=".9"/><line x1="17.0" y1="2" x2="17.0" y2="4.0" stroke="#28b428" stroke-width=".9"/><line x1="18.7" y1="2" x2="18.7" y2="4.8" stroke="#28b428" stroke-width=".9"/><line x1="20.4" y1="2" x2="20.4" y2="4.0" stroke="#28b428" stroke-width=".9"/></g>
<g transform="translate(320.5,50)"><polygon points="10.5,0 16.5,0 13.5,3.2" fill="#5a9cf0"/><rect x="0" y="3.5" width="20.5" height="2" fill="#0b25d8"/><rect x="9" y="7" width="9" height="1.1" fill="#3a9cff"/><rect x="10.5" y="9" width="6" height="1.1" fill="#3a9cff"/><rect x="12" y="11" width="3" height="1.1" fill="#3a9cff"/></g>
<g transform="translate(360.5,48.5)"><rect x="1.2999999999999998" y="2.9" width="2.2" height="5.7" rx="1" fill="#e01414"/><polygon points="0.0,7.5 4.8,7.5 2.4,11.1" fill="#e01414"/><rect x="6.5" y="1.5" width="2.2" height="5.3" rx="1" fill="#e01414"/><polygon points="5.199999999999999,5.700000000000001 10.0,5.700000000000001 7.6,9.3" fill="#e01414"/><rect x="11.4" y="0" width="2.2" height="6.3" rx="1" fill="#e01414"/><polygon points="10.1,5.200000000000001 14.9,5.200000000000001 12.5,8.8" fill="#e01414"/><rect x="16.299999999999997" y="0" width="2.2" height="6.3" rx="1" fill="#e01414"/><polygon points="14.999999999999998,5.200000000000001 19.799999999999997,5.200000000000001 17.4,8.8" fill="#e01414"/><path d="M0.5,14.9 L12.5,9.4 L20.4,9.4" stroke="#0f6a1a" stroke-width="1.9" fill="none"/></g>
<g transform="translate(392.5,47)"><rect x="0.7" y="0.6" width="7.3" height="11.8" fill="#fff" stroke="#5e1212" stroke-width="1.3"/><g shape-rendering="crispEdges"><rect x="2.5" y="3" width="4" height="1" fill="#1424a8"/><rect x="2.5" y="5" width="4" height="1" fill="#1424a8"/><rect x="2.5" y="7" width="4" height="1" fill="#1424a8"/><rect x="9.5" y="3" width="5" height="1" fill="#000"/><rect x="11.5" y="1" width="1" height="5" fill="#000"/><rect x="0.5" y="16" width="5" height="1" fill="#000"/><rect x="2.5" y="14" width="1" height="5" fill="#000"/></g><rect x="16.4" y="1" width="2" height="9.5" fill="#12781c"/><polygon points="14.2,9.5 20.6,9.5 17.4,13.8" fill="#12781c"/><rect x="7.7" y="15.4" width="8.5" height="2.4" fill="#0c1cc8"/><polygon points="15.4,13.6 20.2,16.6 15.4,19.6" fill="#0c1cc8"/></g>
<g transform="translate(432.8,47.3)"><path d="M3.1,2 V17" stroke="#ffe49a" stroke-width="4.6" fill="none"/><path d="M10.1,2 V17" stroke="#ffe49a" stroke-width="4.6" fill="none"/><path d="M17.2,2 V17" stroke="#ffe49a" stroke-width="4.6" fill="none"/><path d="M3,2.3 H17.2 M3,16.9 H17.2" stroke="#ff1010" stroke-width="2"/><path d="M3.1,2 V17" stroke="#f01010" stroke-width="2.7" fill="none"/><circle cx="3.1" cy="2.2" r="2.3" fill="#ff1010"/><circle cx="3.1" cy="17" r="2.3" fill="#ff1010"/><path d="M10.1,2 V17" stroke="#f01010" stroke-width="2.7" fill="none"/><circle cx="10.1" cy="2.2" r="2.3" fill="#ff1010"/><circle cx="10.1" cy="17" r="2.3" fill="#ff1010"/><path d="M17.2,2 V17" stroke="#f01010" stroke-width="2.7" fill="none"/><circle cx="17.2" cy="2.2" r="2.3" fill="#ff1010"/><circle cx="17.2" cy="17" r="2.3" fill="#ff1010"/></g>
<g transform="translate(465,47)"><polygon points="1.5,18.2 4.5,9.2 9.7,9.2 11.4,1.5 18.8,1.5 18.8,18.2" fill="none" stroke="#000" stroke-width="1.25"/><circle cx="1.5" cy="18.2" r="1.45" fill="#f02838"/><circle cx="4.5" cy="9.2" r="1.45" fill="#f02838"/><circle cx="9.7" cy="9.2" r="1.45" fill="#f02838"/><circle cx="11.4" cy="1.5" r="1.45" fill="#f02838"/><circle cx="18.8" cy="1.5" r="1.45" fill="#f02838"/><circle cx="18.8" cy="18.2" r="1.45" fill="#f02838"/></g>
<g transform="translate(497,46.5)"><text x="0" y="10.8" font-family='"Liberation Sans", "DejaVu Sans", sans-serif' font-weight="bold" font-size="14" fill="#e81818" stroke="#e81818" stroke-width=".5" textLength="7.5" lengthAdjust="spacingAndGlyphs">P</text><line x1="12" y1="3" x2="4.5" y2="19" stroke="#8a8a8a" stroke-width="1"/><text x="10" y="19.5" font-family='"Liberation Sans", "DejaVu Sans", sans-serif' font-weight="bold" font-size="14" fill="#1428d8" stroke="#1428d8" stroke-width=".5" textLength="9" lengthAdjust="spacingAndGlyphs">V</text></g>
<g transform="translate(539,47)"><text x="0.4" y="4.9" font-family='"Liberation Sans", "DejaVu Sans", sans-serif' font-weight="bold" font-size="6.8" fill="#5a0606" stroke="#5a0606" stroke-width=".7" textLength="17.2" lengthAdjust="spacingAndGlyphs">OPZ</text><path d="M0.5,13.5 l1.3,-0.8 l1.6,6 l1.6,-12.2 h12.5" stroke="#000" stroke-width="1.05" fill="none"/><text x="5.5" y="13" font-family='"Liberation Sans", "DejaVu Sans", sans-serif' font-weight="bold" font-size="6.8" fill="#e01818">2</text><text x="5" y="19.2" font-family='"Liberation Sans", "DejaVu Sans", sans-serif' font-weight="bold" font-size="6.2" fill="#1428d8">7</text><polygon points="10.6,9 17.2,9 14.692,14.0 17.2,19 10.6,19 13.108,14.0" fill="#e8e83c" stroke="#000" stroke-width="1.1"/><path d="M10.1,9 h7.6 M10.1,19 h7.6" stroke="#000" stroke-width="1.6"/></g>
<g transform="translate(570.4,47)"><text x="0.4" y="4.9" font-family='"Liberation Sans", "DejaVu Sans", sans-serif' font-weight="bold" font-size="6.8" fill="#5a0606" stroke="#5a0606" stroke-width=".7" textLength="17.2" lengthAdjust="spacingAndGlyphs">OPZ</text><path d="M2.4,7.2 V19.5 M1,9 L2.4,6.8 L3.8,9" stroke="#000" stroke-width="1" fill="none"/><path d="M1,14.8 H19" stroke="#000" stroke-width="1"/><polygon points="17.6,13 20.2,14.8 17.6,16.6" fill="#000"/><path d="M3.4,14.8 L4.3,9.5 L5.6,20 L6.9,9.8 L8.2,19 L9.5,10.8 L10.8,18 L12.1,11.8 L13.4,17 L14.6,13 L15.6,16 L16.4,14.8" stroke="#1420c8" stroke-width=".95" fill="none" stroke-linejoin="round"/></g>
<g transform="translate(602,47)"><g shape-rendering="crispEdges"><rect x="0" y="2" width="5" height="1" fill="#000"/><rect x="2" y="0" width="1" height="5" fill="#000"/><rect x="7" y="2" width="5" height="1" fill="#000"/><rect x="9" y="0" width="1" height="5" fill="#000"/><rect x="14" y="2" width="5" height="1" fill="#000"/><rect x="16" y="0" width="1" height="5" fill="#000"/><rect x="0" y="9" width="5" height="1" fill="#000"/><rect x="2" y="7" width="1" height="5" fill="#000"/><rect x="7" y="9" width="5" height="1" fill="#000"/><rect x="9" y="7" width="1" height="5" fill="#000"/><rect x="14" y="9" width="5" height="1" fill="#000"/><rect x="16" y="7" width="1" height="5" fill="#000"/><rect x="0" y="16" width="5" height="1" fill="#000"/><rect x="2" y="14" width="1" height="5" fill="#000"/><rect x="7" y="16" width="5" height="1" fill="#000"/><rect x="9" y="14" width="1" height="5" fill="#000"/><rect x="14" y="16" width="5" height="1" fill="#000"/><rect x="16" y="14" width="1" height="5" fill="#000"/></g></g>
<g transform="translate(634,47)"><path d="M0.3,8.5 l1.8,-1 l2.2,11 l2.2,-18 h15 v2" stroke="#000" stroke-width="1.15" fill="none"/><text x="6.2" y="10" font-family='"Liberation Sans", "DejaVu Sans", sans-serif' font-weight="bold" font-size="8.6" fill="#e01818">2</text><text x="6" y="18.6" font-family='"Liberation Sans", "DejaVu Sans", sans-serif' font-weight="bold" font-size="7.8" fill="#1428d8">7</text><polygon points="11,4.7 19.2,4.7 16,11.5 19.2,18.3 11,18.3 14.2,11.5" fill="#e4ec58" stroke="#000" stroke-width="1.15"/><path d="M10.5,4.7 h9.2 M10.5,18.3 h9.2" stroke="#000" stroke-width="1.5"/></g>
<g transform="translate(666,47)"><path d="M0.3,8.5 l1.8,-1 l2.2,11 l2.2,-18 h15 v2" stroke="#000" stroke-width="1.15" fill="none"/><text x="6.2" y="10" font-family='"Liberation Sans", "DejaVu Sans", sans-serif' font-weight="bold" font-size="8.6" fill="#e01818">2</text><text x="6" y="18.6" font-family='"Liberation Sans", "DejaVu Sans", sans-serif' font-weight="bold" font-size="7.8" fill="#1428d8">7</text><polygon points="11,4.7 19.2,4.7 16,11.5 19.2,18.3 11,18.3 14.2,11.5" fill="#e4ec58" stroke="#000" stroke-width="1.15"/><path d="M10.5,4.7 h9.2 M10.5,18.3 h9.2" stroke="#000" stroke-width="1.5"/><path d="M10,8.5 L19,18.5 M19,8.5 L10,18.5" stroke="#d81010" stroke-width="3.6"/></g>
<g transform="translate(697.5,47)"><path d="M7.5,0.5 h8 l4.5,4.5 v14.5 h-12.5 z" fill="#f2f2f2" stroke="#9e9e9e"/><path d="M15.5,0.5 v4.5 h4.5" fill="#fff" stroke="#9e9e9e"/><path d="M10,8 h8 M10,10.5 h8 M10,13 h8 M10,15.5 h8" stroke="#b8b8b8" stroke-width="1"/><rect x="0.5" y="2" width="9.8" height="9.8" fill="#1c2484"/><rect x="1.8" y="3.3" width="7.2" height="7.2" fill="#3848b0"/><text x="1.2" y="10" font-family='"Liberation Sans", "DejaVu Sans", sans-serif' font-weight="bold" font-size="8" fill="#fff" stroke="#101060" stroke-width=".3">W</text></g>
<g transform="translate(17.5,82)"><polygon points="0.9,17.3 8.5,3.8 13.2,3.8 13.2,17.3" fill="#16dc26" stroke="#000" stroke-width="1.2"/><path d="M8.5,1.7 h6.8" stroke="#e01818" stroke-width="2.6" stroke-dasharray="1.1,0.7"/><path d="M13.2,3.8 h5.2 v-3.2 h4.3" fill="none" stroke="#000" stroke-width="1.2"/></g>
<g transform="translate(125,78.3)"><rect x="0" y="0" width="26" height="25.7" fill="#008484"/><polygon points="5,18.5 11.5,5 21.5,20" fill="#4a9a7a"/><polygon points="5,18.5 8,12 13,18 9,21" fill="#f0e020"/><polygon points="8,12 11.5,5 15,11 11,16" fill="#9a8a6a"/><polygon points="11,16 15,11 17,14 13.5,18" fill="#e01818"/><polygon points="13.5,18 17,13.5 21.5,20 15,19.5" fill="#28e0d0"/><polygon points="5,18.5 11.5,5 21.5,20" fill="none" stroke="#e8d020" stroke-width="1"/><path d="M20.5,3 L15,12" stroke="#20c040" stroke-width="1"/><path d="M7,21.5 q4,2.5 8,0" stroke="#f0e020" stroke-width="1.4" fill="none"/></g>
<g transform="translate(16,114.5)"><polygon points="11,6 18,1 24,1 24,9 12,10" fill="#22b24a"/><polygon points="12,10 24,8 24,12 11,14" fill="#a4c43c"/><polygon points="11,13.5 24,11.5 24,16 9,17.5" fill="#f2c41e"/><polygon points="0,20 9,16.5 24,15.5 24,20" fill="#c4743c"/><polygon points="5,5 12,5 10,18 0,18" fill="#fff"/><line x1="5.0" y1="5.5" x2="14.5" y2="5.5" stroke="#000" stroke-width="1.5"/><line x1="3.9" y1="8.6" x2="13.4" y2="8.6" stroke="#000" stroke-width="1.5"/><line x1="2.8" y1="11.8" x2="12.2" y2="11.8" stroke="#000" stroke-width="1.5"/><line x1="1.6" y1="14.9" x2="11.1" y2="14.9" stroke="#000" stroke-width="1.5"/><line x1="0.5" y1="18.0" x2="10.0" y2="18.0" stroke="#000" stroke-width="1.5"/></g>
<g transform="translate(52,116.5)"><polygon points="5,4 13,4 8,17.5 0,17.5" fill="#ffb01e" stroke="#8a1010" stroke-width="1"/><line x1="4.3" y1="7.0" x2="12.3" y2="7.0" stroke="#e03a10" stroke-width="1.3"/><line x1="3.1" y1="9.7" x2="11.1" y2="9.7" stroke="#e03a10" stroke-width="1.3"/><line x1="2.0" y1="12.3" x2="10.0" y2="12.3" stroke="#e03a10" stroke-width="1.3"/><line x1="0.8" y1="15.0" x2="8.8" y2="15.0" stroke="#e03a10" stroke-width="1.3"/><polygon points="12,4.5 20,0.5 21,3 10,17 8.5,16.5" fill="#7c7c7c" stroke="#222" stroke-width=".8"/><path d="M13.5,9 v7 M11.5,14 h4" stroke="#e01818" stroke-width="1"/></g>
<g transform="translate(87,115)"><polygon points="5,0.3 19,0.3 15.5,14.3 0.3,14.3" fill="#ff6a28"/><line x1="4.4" y1="2.8" x2="18.9" y2="2.8" stroke="#c81410" stroke-width="1.5"/><line x1="3.5" y1="5.5" x2="18.0" y2="5.5" stroke="#c81410" stroke-width="1.5"/><line x1="2.6" y1="8.2" x2="17.1" y2="8.2" stroke="#c81410" stroke-width="1.5"/><line x1="1.7" y1="10.9" x2="16.2" y2="10.9" stroke="#c81410" stroke-width="1.5"/><line x1="0.8" y1="13.6" x2="15.3" y2="13.6" stroke="#c81410" stroke-width="1.5"/><rect x="0.9" y="16" width="15.2" height="5.2" fill="#f4fff0" stroke="#0c8a0c" stroke-width="1.4"/><path d="M3.2,16 v5 M5.4,16 v5 M7.6,16 v5" stroke="#0c8a0c" stroke-width="1.1"/><rect x="9.5" y="17.3" width="2.2" height="2.4" fill="#0c8a0c" opacity=".35"/><rect x="12.7" y="17.3" width="2.2" height="2.4" fill="#0c8a0c" opacity=".35"/></g>
<g transform="translate(117.5,115)"><polygon points="0,16 6,12 14,16 22.5,2 22.5,21.5 0,21.5" fill="#b8e01e"/><polygon points="0,18.5 22.5,14 22.5,21.5 0,21.5" fill="#22b44a"/><polygon points="19,8 22.5,2 22.5,16 18,17" fill="#42b83a"/><polygon points="7,1 16,1 11,16 2,14" fill="#ff8a3c"/><line x1="6.8" y1="3.0" x2="14.8" y2="3.0" stroke="#b01010" stroke-width="1.5"/><line x1="5.7" y1="5.8" x2="13.7" y2="5.8" stroke="#b01010" stroke-width="1.5"/><line x1="4.7" y1="8.5" x2="12.7" y2="8.5" stroke="#b01010" stroke-width="1.5"/><line x1="3.6" y1="11.2" x2="11.6" y2="11.2" stroke="#b01010" stroke-width="1.5"/><line x1="2.5" y1="14.0" x2="10.5" y2="14.0" stroke="#b01010" stroke-width="1.5"/><polygon points="15,1 19.5,1 17,9 12,16 10.5,15.5" fill="#fff6b8"/><path d="M2,13.5 Q13,18 20,2.5" stroke="#d01414" stroke-width="1.3" fill="none"/></g>
<g transform="translate(153.8,116)"><polygon points="6,0.5 19,0.5 15,17.5 0.5,17.5" fill="#ffc4b4"/><path d="M6,0.5 L0.5,17.5" stroke="#9a0c0c" stroke-width="1.3"/><line x1="6.0" y1="1.0" x2="19.5" y2="1.0" stroke="#b81010" stroke-width="1.3"/><line x1="5.0" y1="4.3" x2="18.5" y2="4.3" stroke="#b81010" stroke-width="1.3"/><line x1="3.9" y1="7.6" x2="17.4" y2="7.6" stroke="#b81010" stroke-width="1.3"/><line x1="2.9" y1="10.9" x2="16.4" y2="10.9" stroke="#b81010" stroke-width="1.3"/><line x1="1.8" y1="14.2" x2="15.3" y2="14.2" stroke="#b81010" stroke-width="1.3"/><line x1="0.8" y1="17.5" x2="14.3" y2="17.5" stroke="#b81010" stroke-width="1.3"/></g>
<g transform="translate(185.5,114)"><path d="M0.5,0.5 L11,20 M3.5,0.5 L13,18.5" stroke="#1e9a6a" stroke-width="1" fill="none"/><polygon points="14,5 24,5 21,21.5 10.5,21.5" fill="#ffc4b4"/><line x1="13.8" y1="6.5" x2="23.8" y2="6.5" stroke="#c01010" stroke-width="1.4"/><line x1="13.2" y1="9.4" x2="23.2" y2="9.4" stroke="#c01010" stroke-width="1.4"/><line x1="12.6" y1="12.3" x2="22.6" y2="12.3" stroke="#c01010" stroke-width="1.4"/><line x1="12.0" y1="15.2" x2="22.0" y2="15.2" stroke="#c01010" stroke-width="1.4"/><line x1="11.4" y1="18.1" x2="21.4" y2="18.1" stroke="#c01010" stroke-width="1.4"/><line x1="10.8" y1="21.0" x2="20.8" y2="21.0" stroke="#c01010" stroke-width="1.4"/><path d="M16.5,4 L13.5,21.5 M21,4 L18,21.5" stroke="#c01010" stroke-width="1.2"/></g>
<g transform="translate(221.8,115)"><polygon points="6,0.5 13,0.5 8,19 0.5,19" fill="#ff6a20"/><polygon points="13,3 19.5,3 15,19 8,19" fill="#ffd0c0"/><line x1="5.8" y1="1.5" x2="19.8" y2="1.5" stroke="#b00c0c" stroke-width="1.5"/><line x1="5.0" y1="4.3" x2="19.0" y2="4.3" stroke="#b00c0c" stroke-width="1.5"/><line x1="4.1" y1="7.2" x2="18.1" y2="7.2" stroke="#b00c0c" stroke-width="1.5"/><line x1="3.3" y1="10.0" x2="17.3" y2="10.0" stroke="#b00c0c" stroke-width="1.5"/><line x1="2.5" y1="12.8" x2="16.5" y2="12.8" stroke="#b00c0c" stroke-width="1.5"/><line x1="1.6" y1="15.7" x2="15.6" y2="15.7" stroke="#b00c0c" stroke-width="1.5"/><line x1="0.8" y1="18.5" x2="14.8" y2="18.5" stroke="#b00c0c" stroke-width="1.5"/></g>
<g transform="translate(253,115.2)"><polygon points="10.7,0 23.8,0 19.5,12 24.2,12 24.2,18.3 19.8,18.3 19.8,21.6 2.7,21.6 0.1,12.5 5.5,12" fill="#fff" stroke="#fff" stroke-width="2.2" stroke-linejoin="round" opacity=".85" transform="translate(.6,.8)"/><polygon points="10.7,0 23.8,0 19.5,12 24.2,12 24.2,18.3 19.8,18.3 19.8,21.6 2.7,21.6 0.1,12.5 5.5,12" fill="#9b9b9b"/></g>
<g transform="translate(288,115.2)"><polygon points="10.7,0 23.8,0 19.5,12 24.2,12 24.2,18.3 19.8,18.3 19.8,21.6 2.7,21.6 0.1,12.5 5.5,12" fill="#fff" stroke="#fff" stroke-width="2.2" stroke-linejoin="round" opacity=".85" transform="translate(.6,.8)"/><polygon points="10.7,0 23.8,0 19.5,12 24.2,12 24.2,18.3 19.8,18.3 19.8,21.6 2.7,21.6 0.1,12.5 5.5,12" fill="#9b9b9b"/><circle cx="3" cy="13" r="1.6" fill="none" stroke="#c8c8c8" stroke-width=".8"/><path d="M20,15 h4 M22,13 v4" stroke="#d8d8d8" stroke-width="1"/></g>
<g transform="translate(323.5,115.2)"><polygon points="5,0 22.5,0 18,21.6 0.5,21.6" fill="#fff" stroke="#fff" stroke-width="2.2" opacity=".85" transform="translate(.6,.8)"/><polygon points="5,0 22.5,0 18,21.6 0.5,21.6" fill="#9b9b9b"/><path d="M8.5,2 L4.5,20 M12,4 L10,13" stroke="#cfcfcf" stroke-width=".9"/></g>
<g transform="translate(356,115.2)"><polygon points="10.7,0 23.8,0 19.5,12 24.2,12 24.2,18.3 19.8,18.3 19.8,21.6 2.7,21.6 0.1,12.5 5.5,12" fill="#fff" stroke="#fff" stroke-width="2.2" stroke-linejoin="round" opacity=".85" transform="translate(.6,.8)"/><polygon points="10.7,0 23.8,0 19.5,12 24.2,12 24.2,18.3 19.8,18.3 19.8,21.6 2.7,21.6 0.1,12.5 5.5,12" fill="#9b9b9b"/><path d="M16,4 L13,19" stroke="#b4b4b4" stroke-width=".9"/></g>
<g transform="translate(420.5,115.2)"><polygon points="10.7,0 23,0 23,21.6 2.7,21.6 0.1,12.5 5.5,12" fill="#fff" stroke="#fff" stroke-width="2.2" opacity=".85" transform="translate(.6,.8)"/><polygon points="10.7,0 23,0 23,21.6 2.7,21.6 0.1,12.5 5.5,12" fill="#9b9b9b"/><path d="M22.5,8 a5.5,5.5 0 1 0 0,9" stroke="#d4d4d4" stroke-width="1" fill="none"/><path d="M22.5,10 a3,3 0 1 0 0,5" stroke="#c4c4c4" stroke-width="1" fill="none"/><circle cx="22.3" cy="12.5" r="1.4" fill="#f0f0f0"/></g>
<g transform="translate(1892,163.5)"><rect x="0" y="0" width="20" height="17.5" fill="#1e66b4"/><rect x="1.5" y="3.5" width="17" height="11.5" fill="#e8f0fa"/><path d="M1.5,6.3 h17 M1.5,9.2 h17 M1.5,12.1 h17" stroke="#4a86c8" stroke-width="1"/><path d="M7.2,3.5 v11.5 M12.8,3.5 v11.5" stroke="#4a86c8" stroke-width="1"/><rect x="7.5" y="3.5" width="5" height="11.5" fill="#f2c49a" opacity=".55"/><rect x="0" y="15.5" width="20" height="2" fill="#2a78c8"/></g>
<g transform="translate(1892.5,197)"><text x="0" y="17" font-family='"Liberation Sans", "DejaVu Sans", sans-serif' font-weight="bold" font-size="21" fill="#9e9e9e">?</text><rect x="12.5" y="8.5" width="10" height="8" fill="#f4f4f4" stroke="#8e8e8e"/><path d="M12.5,11.2 h10 M12.5,13.9 h10 M15.8,8.5 v8 M19.2,8.5 v8" stroke="#8e8e8e" stroke-width=".9"/></g>
<g transform="translate(5,990)"><path d="M3,16.5 L9,9.5" stroke="#b86a28" stroke-width="4.4" stroke-linecap="round"/><path d="M2.8,15.5 L8,9.5" stroke="#f0b070" stroke-width="1.6" stroke-linecap="round"/><circle cx="13.2" cy="6.8" r="6" fill="#fff" stroke="#111" stroke-width="1.5"/><rect x="10.7" y="4.3" width="5" height="5" fill="none" stroke="#111" stroke-width="1.1"/><path d="M13.2,1.5 v10.6 M8,6.8 h10.4" stroke="#111" stroke-width="1.5"/></g>
<g transform="translate(36.5,1001)"><polygon points="0,0 8.5,0 4.25,4.5" fill="#111"/></g>
<g transform="translate(52.5,990)"><polygon points="7,0 14.5,0 14.5,8.5 21,8.5 10.7,19 0.5,8.5 7,8.5" fill="url(#garrow)" stroke="#1a5ac0" stroke-width=".6"/></g>
<g transform="translate(83.3,1001)"><polygon points="0,0 8.5,0 4.25,4.5" fill="#111"/></g>
<g transform="translate(100.5,990.5)"><g transform="scale(1.27,1.06)"><path d="M4.5,10.5 L1.5,7 Q0.5,5.5 2,5.3 Q3.3,5.3 5,7.5 V2.5 Q5,1.2 6,1.2 Q7,1.2 7,2.5 V1.5 Q7,0.3 8.2,0.3 Q9.3,0.3 9.3,1.5 V2.3 Q9.3,1.2 10.4,1.2 Q11.5,1.2 11.5,2.5 V3.8 Q11.5,2.8 12.6,2.8 Q13.6,2.8 13.6,4 V11 Q13.6,14 12,16.5 H6 Q5.5,13 4.5,10.5 Z" fill="#fff" stroke="#5e5e5e" stroke-width="1.1"/><path d="M7,2.5 V8 M9.3,2.3 V8 M11.5,3.8 V8" stroke="#6e6e6e" stroke-width=".8"/></g></g>
<g transform="translate(131.5,990)"><text x="0" y="9" font-family='"Liberation Sans", "DejaVu Sans", sans-serif' font-size="11" fill="#e01818" transform="rotate(-8 4 6)">A</text><text x="5.5" y="14" font-family='"Liberation Sans", "DejaVu Sans", sans-serif' font-size="12" fill="#1428c8" transform="rotate(-6 9 10)">B</text><text x="10.5" y="19" font-family='"Liberation Sans", "DejaVu Sans", sans-serif' font-size="12.5" fill="#111">C</text></g>
<g transform="translate(165,992)"><ellipse cx="7.2" cy="9" rx="6.6" ry="3.4" transform="rotate(24 7.2 9)" fill="#0a0a0a"/><polygon points="9,8 15,1 17.3,0.3 16.8,2.8 11,9.8" fill="#1c34c4"/><path d="M10,7.5 L15.5,2" stroke="#e8f0ff" stroke-width="1"/><rect x="1" y="13" width="3" height="3" fill="#e01818"/><rect x="11.5" y="13.3" width="3.2" height="2.8" fill="#128a20"/><path d="M5.5,11.5 L3,13.5 M9.5,12 L12.5,13.8" stroke="#111" stroke-width=".9"/></g>
<g transform="translate(195.8,991)"><text x="0.3" y="6.8" font-family='"Liberation Sans", "DejaVu Sans", sans-serif' font-weight="bold" font-size="8.6" fill="#0a0a0a" stroke="#0a0a0a" stroke-width=".55" textLength="19.6" lengthAdjust="spacingAndGlyphs">DXF</text><rect x="0" y="8.8" width="20.2" height="2" fill="#e01818"/><rect x="2.5" y="11.8" width="15" height="1.9" fill="#e01818"/><rect x="5.5" y="14.8" width="9" height="1.8" fill="#e01818"/></g>
<g transform="translate(229.4,989.8)"><text x="0" y="18" font-family='"Liberation Serif", "DejaVu Serif", serif' font-weight="bold" font-size="25.5" fill="#1010d8" stroke="#1010d8" stroke-width=".7" textLength="16.3" lengthAdjust="spacingAndGlyphs">T</text></g>
<g transform="translate(260,991)"><circle cx="9.5" cy="9" r="9" fill="url(#ghelp)"/><text x="9.5" y="14.5" text-anchor="middle" font-family='"Liberation Sans", "DejaVu Sans", sans-serif' font-weight="bold" font-size="15" fill="#fff">?</text></g>
<g transform="translate(291.5,992.5)"><path d="M1,2 H19.5" stroke="#1428c8" stroke-width="1.1"/><polygon points="0,2 3,0.3 3,3.7" fill="#1428c8"/><polygon points="20.5,2 17.5,0.3 17.5,3.7" fill="#1428c8"/><text x="4.5" y="14.5" font-family='"Liberation Sans", "DejaVu Sans", sans-serif' font-weight="bold" font-size="10.5" fill="#0c7a14" stroke="#0c7a14" stroke-width=".4" textLength="12.5" lengthAdjust="spacingAndGlyphs">50</text></g>
<g transform="translate(325,991)"><g shape-rendering="crispEdges"><rect x="0" y="0" width="18" height="17" fill="#000"/><rect x="1" y="1" width="16" height="15" fill="#ffffb4"/><rect x="0" y="16" width="19" height="2" fill="#8a108a"/><rect x="17" y="0" width="2" height="18" fill="#8a108a"/><rect x="6" y="1" width="1" height="15" fill="#9a9a60"/><rect x="11" y="1" width="1" height="15" fill="#9a9a60"/><rect x="2" y="2" width="3" height="1" fill="#000"/><rect x="8" y="2" width="3" height="1" fill="#000"/><rect x="13" y="2" width="3" height="1" fill="#000"/><rect x="2" y="4" width="3" height="1" fill="#000"/><rect x="8" y="4" width="3" height="1" fill="#000"/><rect x="13" y="4" width="3" height="1" fill="#000"/><rect x="2" y="6" width="3" height="1" fill="#000"/><rect x="8" y="6" width="3" height="1" fill="#000"/><rect x="13" y="6" width="3" height="1" fill="#000"/><rect x="2" y="8" width="3" height="1" fill="#000"/><rect x="8" y="8" width="3" height="1" fill="#000"/><rect x="13" y="8" width="3" height="1" fill="#000"/><rect x="2" y="10" width="3" height="1" fill="#000"/><rect x="8" y="10" width="3" height="1" fill="#000"/><rect x="13" y="10" width="3" height="1" fill="#000"/><rect x="2" y="12" width="3" height="1" fill="#000"/><rect x="8" y="12" width="3" height="1" fill="#000"/><rect x="13" y="12" width="3" height="1" fill="#000"/><rect x="2" y="14" width="3" height="1" fill="#000"/><rect x="8" y="14" width="3" height="1" fill="#000"/><rect x="13" y="14" width="3" height="1" fill="#000"/></g></g>
<g transform="translate(358.5,991)"><path d="M0.5,0.5 h8 l4,4 v13 h-12 z" fill="#f8f8f8" stroke="#a0a0a0"/><path d="M8.5,0.5 v4 h4" fill="none" stroke="#a0a0a0"/><circle cx="11.2" cy="13.8" r="4.4" fill="#e8e028" stroke="#111" stroke-width="1.7" stroke-dasharray="1.9,1.3"/><circle cx="11.2" cy="13.8" r="1.7" fill="#e8e028" stroke="#111" stroke-width="1"/></g>
<g transform="translate(392.5,991)"><path d="M0.5,0.5 h7 l3.5,3.5 v13 h-10.5 z" fill="#f0f0f0" stroke="#b4b4b4"/><path d="M7.5,0.5 v3.5 h3.5" fill="none" stroke="#b4b4b4"/><path d="M2.5,13.5 L5,7.5 L7,12" stroke="#b4b4b4" fill="none"/><circle cx="9" cy="10.5" r="4" fill="#fff" fill-opacity=".7" stroke="#a8a8a8" stroke-width="1.1"/><path d="M12,13.5 L15.5,17" stroke="#e0a050" stroke-width="2"/></g>
<g transform="translate(565,993.3)"><polygon points="0.8,7 7,1.2 7,4.7 15.2,4.7 15.2,9.3 7,9.3 7,12.8" fill="#22e8f0" stroke="#111" stroke-width="1.4" stroke-linejoin="miter"/></g>
<g transform="translate(805.8,993.3)"><polygon points="15.7,7 9.5,1.2 9.5,4.7 1.2,4.7 1.2,9.3 9.5,9.3 9.5,12.8" fill="#22e8f0" stroke="#111" stroke-width="1.4"/></g>
<g transform="translate(910,993.5)"><polygon points="0.8,7 7,1.2 7,4.7 15.2,4.7 15.2,9.3 7,9.3 7,12.8" fill="#2a9a3c" stroke="#103a18" stroke-width="1.4" stroke-linejoin="miter"/></g>
<g transform="translate(1084,993.5)"><polygon points="15.7,7 9.5,1.2 9.5,4.7 1.2,4.7 1.2,9.3 9.5,9.3 9.5,12.8" fill="#2a9a3c" stroke="#103a18" stroke-width="1.4"/></g>
<g transform="translate(836.5,990)"><text x="1.5" y="5.6" font-family='"Liberation Sans", "DejaVu Sans", sans-serif' font-weight="bold" font-size="7.3" fill="#111" stroke="#111" stroke-width=".6" textLength="14.8" lengthAdjust="spacingAndGlyphs">INV</text><polygon points="4.5,8 9,8 7,20 0,20" fill="#18c030"/><path d="M3.5,11 h5 M2.5,14 h5.5 M1.5,17 h6" stroke="#0a7a1a" stroke-width="1"/><polygon points="10,8 19.5,20 10,20" fill="#e8b8d0" stroke="#1428c8" stroke-width="1"/><path d="M10,11 h2.5 M10,13.5 h4.5 M10,16 h6.5 M10,18.3 h8" stroke="#e01818" stroke-width="1"/></g>
<g transform="translate(869,991)"><rect x="0.6" y="0.6" width="17" height="16.8" fill="#fff0c8" stroke="#111" stroke-width="1.3"/><rect x="1.2" y="1.2" width="15.8" height="3.4" fill="#1428c8"/><path d="M2.2,6.3 h13.8 M2.2,10.3 h13.8 M2.2,14.8 h13.8" stroke="#111" stroke-width="1.25"/></g>
<g transform="translate(1113.5,990)"><text x="1.5" y="5.6" font-family='"Liberation Sans", "DejaVu Sans", sans-serif' font-weight="bold" font-size="7.3" fill="#8a0a0a" stroke="#8a0a0a" stroke-width=".6" textLength="14.8" lengthAdjust="spacingAndGlyphs">INV</text><polygon points="5,8 15,8 12,19 1,19" fill="#f2f2f2" stroke="#bcbcbc" stroke-width=".8"/><path d="M4,11 h9 M3,14 h9 M2.5,16.5 h8" stroke="#b0b0b0" stroke-width=".9"/><polygon points="19.5,7 19.5,19.5 7,19.5 14,16 17.5,11" fill="#fff0a0"/><path d="M2,18.8 Q15.5,20.5 19,6.5" stroke="#b8200c" stroke-width="1.15" fill="none"/></g>
<g transform="translate(1145,989.5)"><text x="0.3" y="14" font-family='"Liberation Sans", "DejaVu Sans", sans-serif' font-weight="bold" font-size="18" fill="#e01010" stroke="#e01010" stroke-width=".4" textLength="9.5" lengthAdjust="spacingAndGlyphs">?</text><text x="10.5" y="8.2" font-family='"Liberation Sans", "DejaVu Sans", sans-serif' font-weight="bold" font-size="8.6" fill="#0a0a0a" stroke="#0a0a0a" stroke-width=".35" textLength="10.5" lengthAdjust="spacingAndGlyphs">FS</text><path d="M1,16.8 H6.5 Q12.5,27 22,10.5" stroke="#f4a428" stroke-width="3.6" fill="none" opacity=".9"/><path d="M7,14.8 Q12.5,25 21.5,9 Z" fill="#fffbe8"/><path d="M9.5,14 v4 M12,13 v6.3 M14.5,12 v6.6 M17,11 v5 M19.5,10 v2.4 M7,14.8 L21.5,9" stroke="#111" stroke-width=".95"/><path d="M0.8,14.8 H7 Q12.5,25 21.5,9" stroke="#111" stroke-width="1.15" fill="none"/></g>
</svg>
</body></html>
